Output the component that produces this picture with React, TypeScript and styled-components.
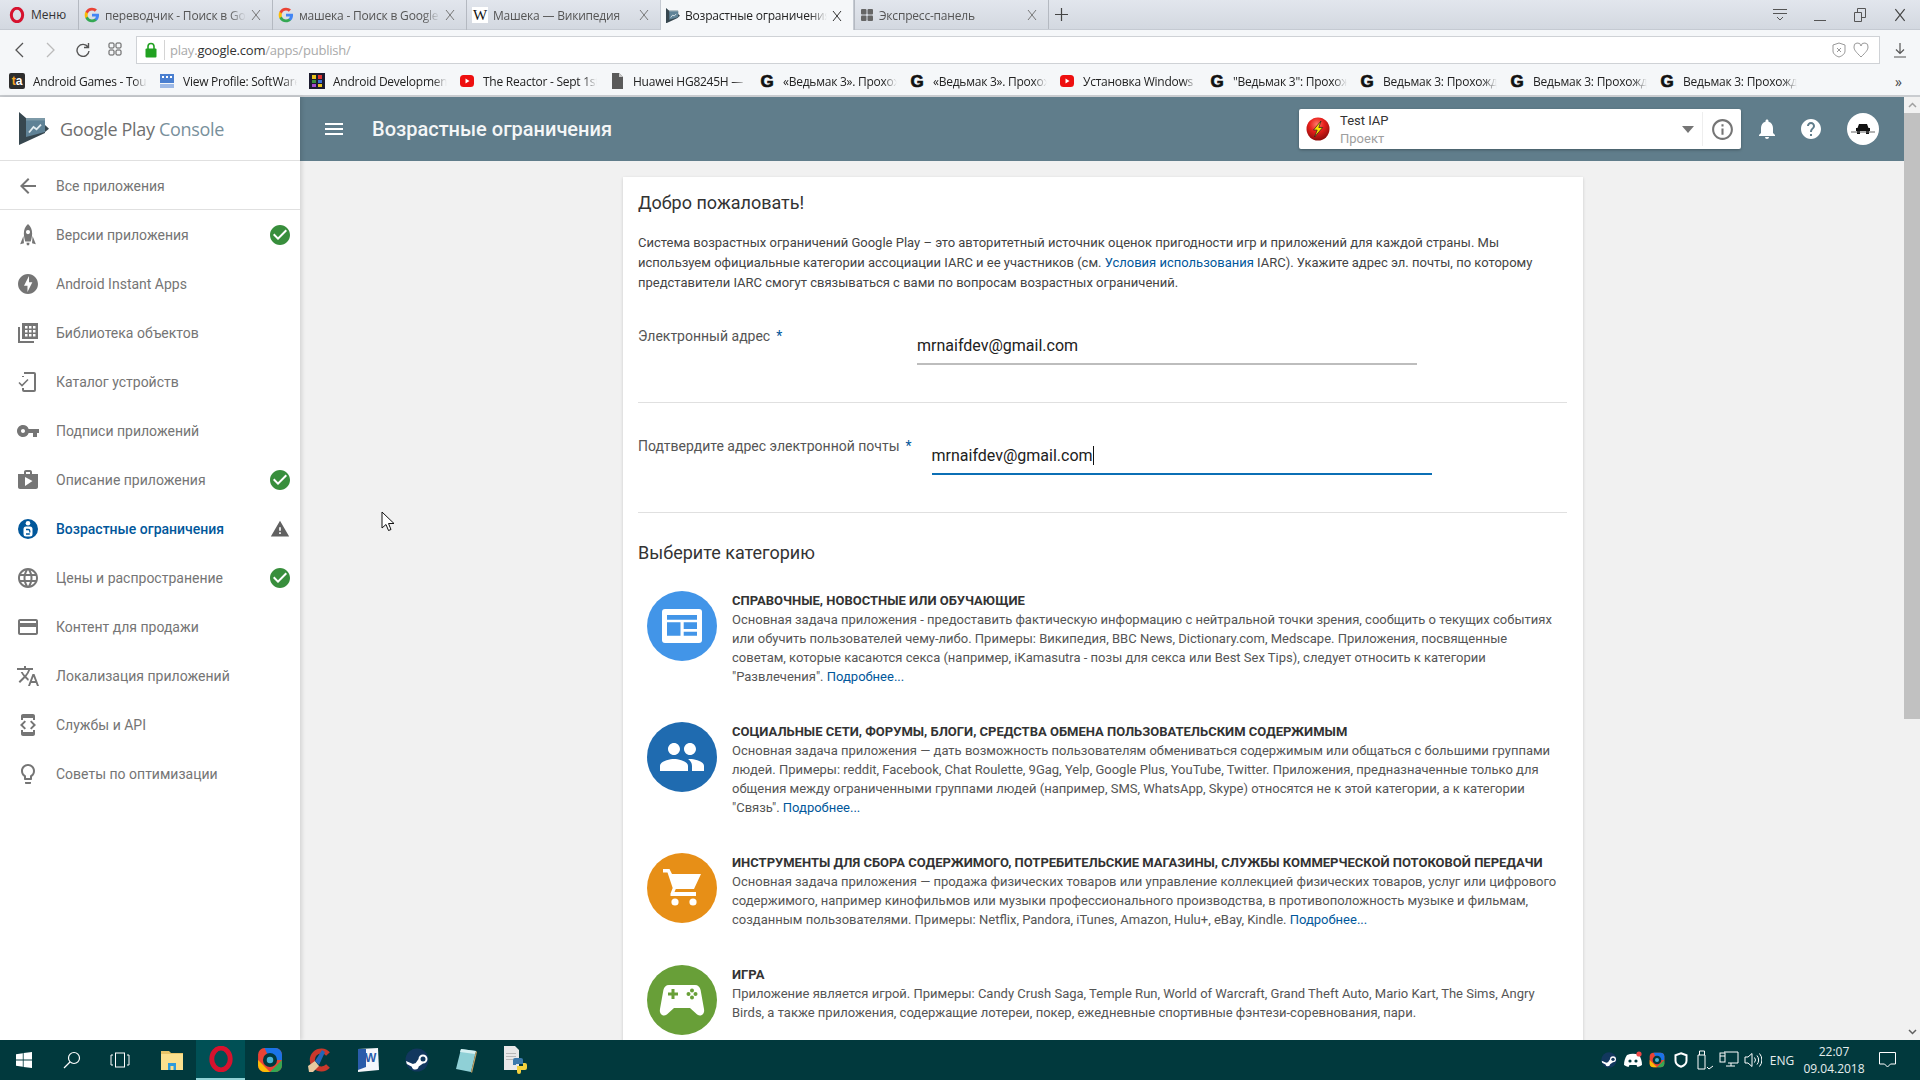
import React from 'react';
import styled, { createGlobalStyle } from 'styled-components';
import {
  MdArrowBack,
  MdCheckCircle,
  MdCreditCard,
  MdDeveloperMode,
  MdHelp,
  MdInfoOutline,
  MdLanguage,
  MdLightbulbOutline,
  MdMenu,
  MdNotifications,
  MdOfflineBolt,
  MdPeople,
  MdShop,
  MdTranslate,
  MdVpnKey,
  MdWarning,
} from 'react-icons/md';

const UI_FONT = '"Open Sans", "Noto Sans", sans-serif';
const APP_FONT = 'Roboto, "Noto Sans", sans-serif';

const GlobalStyle = createGlobalStyle`
  html, body {
    margin: 0;
    padding: 0;
    height: 100%;
    overflow: hidden;
    background: #f1f1f1;
    font-family: ${APP_FONT};
  }
  * { box-sizing: border-box; }
`;

const Page = styled.div`
  position: relative;
  width: 1920px;
  height: 1080px;
  display: flex;
  flex-direction: column;
  overflow: hidden;
`;

/* ---------- browser chrome ---------- */

const TabBar = styled.div`
  height: 30px;
  display: flex;
  align-items: stretch;
  background: linear-gradient(#e2e6ed, #d3d8e0);
  border-bottom: 1px solid #c5cad2;
  font-family: ${UI_FONT};
  font-size: 12px;
  letter-spacing: -0.2px;
  color: #333;
`;

const MenuButton = styled.div`
  width: 78px;
  display: flex;
  align-items: center;
  gap: 6px;
  padding-left: 9px;
  letter-spacing: 0;
`;

const Tab = styled.div<{ $active?: boolean }>`
  width: 194px;
  height: ${(p) => (p.$active ? '31px' : '30px')};
  display: flex;
  align-items: center;
  gap: 5px;
  padding: 0 11px 0 5px;
  background: ${(p) => (p.$active ? '#f5f7f9' : 'transparent')};
  border-left: 1px solid ${(p) => (p.$active ? '#c5cad2' : '#b4b9c1')};
  border-right: ${(p) => (p.$active ? '1px solid #c5cad2' : 'none')};
  color: ${(p) => (p.$active ? '#222' : '#555')};
`;

const Fade = styled.span`
  flex: 1;
  min-width: 0;
  overflow: hidden;
  white-space: nowrap;
  -webkit-mask-image: linear-gradient(to right, #000 88%, transparent 100%);
  mask-image: linear-gradient(to right, #000 88%, transparent 100%);
`;

const NewTab = styled.div`
  width: 26px;
  display: flex;
  align-items: center;
  justify-content: center;
  border-left: 1px solid #b4b9c1;
`;

const WindowControls = styled.div`
  margin-left: auto;
  display: flex;
  align-items: center;
`;

const WindowButton = styled.div`
  width: 40px;
  display: flex;
  justify-content: center;
`;

const Toolbar = styled.div`
  height: 36px;
  padding-top: 3px;
  display: flex;
  align-items: center;
  background: #f5f7f9;
`;

const NavButton = styled.div`
  width: 32px;
  display: flex;
  justify-content: center;
  color: #555;
`;

const NavGroup = styled.div`
  width: 136px;
  display: flex;
  padding-left: 3px;
`;

const AddressBar = styled.div`
  width: 1744px;
  height: 28px;
  background: #fff;
  border: 1px solid #cfd2d6;
  display: flex;
  align-items: center;
  padding: 0 10px 0 8px;
  font-family: ${UI_FONT};
  font-size: 13px;
  letter-spacing: -0.2px;
  color: #a9a9a9;
`;

const UrlDivider = styled.span`
  width: 1px;
  height: 20px;
  background: #d4d4d4;
  margin: 0 5px 0 7px;
`;

const UrlHost = styled.span`
  color: #333;
`;

const AddressIcons = styled.div`
  margin-left: auto;
  display: flex;
  gap: 7px;
  align-items: center;
`;

const DownloadButton = styled.div`
  width: 40px;
  display: flex;
  justify-content: center;
`;

const Bookmarks = styled.div`
  height: 31px;
  padding-top: 1px;
  display: flex;
  align-items: center;
  background: #f5f7f9;
  border-bottom: 2px solid #c9ccd0;
  font-family: ${UI_FONT};
  font-size: 12px;
  letter-spacing: -0.25px;
  color: #222;
`;

const Bookmark = styled.div`
  width: 150px;
  flex: none;
  display: flex;
  align-items: center;
  gap: 8px;
  padding: 0 3px 0 9px;
`;

const MoreBookmarks = styled.div`
  margin-left: 95px;
  color: #444;
  font-size: 14px;
`;

const FaviconBox = styled.span<{ $bg?: string; $color?: string }>`
  width: 16px;
  height: 16px;
  flex: none;
  display: inline-flex;
  align-items: center;
  justify-content: center;
  overflow: hidden;
  background: ${(p) => p.$bg || 'transparent'};
  color: ${(p) => p.$color || '#111'};
  border-radius: 2px;
  font-weight: 700;
  line-height: 1;
  letter-spacing: 0;
`;

const GLetter = styled(FaviconBox)`
  font-family: "Liberation Sans", sans-serif;
  font-size: 17px;
  font-weight: 900;
  -webkit-text-stroke: 0.7px #111;
`;

const WikiLetter = styled(FaviconBox)`
  font-family: "Liberation Serif", serif;
  font-size: 15px;
  font-weight: 400;
  background: #fff;
  border-radius: 0;
`;

const TaLogo = styled(FaviconBox)`
  font-family: "Liberation Sans", sans-serif;
  font-size: 12px;
  background: #2d2d2d;
`;

const Orange = styled.span`
  color: #f7a823;
`;

const White = styled.span`
  color: #fff;
`;

/* ---------- console layout ---------- */

const Body = styled.div`
  flex: 1;
  min-height: 0;
  display: flex;
`;

const Sidebar = styled.aside`
  width: 300px;
  flex: none;
  background: #fff;
  box-shadow: 2px 0 4px rgba(0, 0, 0, 0.12);
  z-index: 2;
  font-size: 14px;
  color: #757575;
`;

const LogoRow = styled.div`
  height: 64px;
  display: flex;
  align-items: center;
  gap: 11px;
  padding-left: 19px;
  border-bottom: 1px solid #e0e0e0;
`;

const LogoText = styled.div`
  font-family: "Open Sans", ${APP_FONT};
  font-size: 18px;
  letter-spacing: -0.33px;
  color: #6f6f6f;
  white-space: nowrap;
`;

const LogoConsole = styled.span`
  color: #78909c;
`;

const BackRow = styled.div`
  height: 49px;
  padding-top: 1px;
  display: flex;
  align-items: center;
  gap: 16px;
  padding-left: 16px;
  border-bottom: 1px solid #e0e0e0;
`;

const NavList = styled.nav`
  display: flex;
  flex-direction: column;
`;

const NavItem = styled.div<{ $active?: boolean }>`
  height: 49px;
  display: flex;
  align-items: center;
  gap: 16px;
  padding: 0 8px 0 16px;
  color: ${(p) => (p.$active ? '#01579b' : '#757575')};
  font-weight: ${(p) => (p.$active ? 500 : 400)};
`;

const NavIcon = styled.span`
  width: 24px;
  height: 24px;
  flex: none;
  display: flex;
  font-size: 24px;
`;

const NavBadge = styled.span<{ $color: string; $small?: boolean }>`
  margin-left: auto;
  margin-right: ${(p) => (p.$small ? '2px' : '0')};
  display: flex;
  font-size: ${(p) => (p.$small ? '20px' : '24px')};
  color: ${(p) => p.$color};
`;

const Right = styled.div`
  flex: 1;
  min-width: 0;
  display: flex;
`;

const Column = styled.div`
  flex: 1;
  min-width: 0;
  display: flex;
  flex-direction: column;
`;

const Header = styled.header`
  height: 64px;
  flex: none;
  background: #607d8b;
  display: flex;
  align-items: center;
  padding-left: 22px;
  color: #fff;
`;

const HeaderTitle = styled.div`
  margin-left: 26px;
  font-size: 20px;
  font-weight: 500;
  color: #f4f6f7;
`;

const ProjectBox = styled.div`
  margin-left: auto;
  width: 442px;
  height: 40px;
  background: #fff;
  border-radius: 2px;
  box-shadow: 0 1px 3px rgba(0, 0, 0, 0.3);
  display: flex;
  align-items: center;
  padding-left: 7px;
  color: #333;
`;

const ProjectText = styled.div`
  margin-left: 10px;
  padding-top: 2px;
  font-size: 13px;
  line-height: 18px;
`;

const ProjectSub = styled.div`
  color: #9e9e9e;
`;

const Caret = styled.span`
  margin-left: auto;
  width: 0;
  height: 0;
  border-left: 6px solid transparent;
  border-right: 6px solid transparent;
  border-top: 7px solid #757575;
`;

const ProjectInfo = styled.div`
  margin-left: 8px;
  width: 39px;
  height: 34px;
  display: flex;
  align-items: center;
  justify-content: center;
  border-left: 1px solid #eee;
  color: #757575;
  font-size: 25px;
`;

const HeaderIcons = styled.div`
  display: flex;
  align-items: center;
  padding-left: 4px;
  padding-right: 25px;
`;

const HeaderIcon = styled.div`
  width: 44px;
  display: flex;
  justify-content: center;
  font-size: 24px;
`;

const Avatar = styled.div`
  width: 32px;
  height: 32px;
  margin-left: 14px;
  border-radius: 50%;
  background: #fff;
  display: flex;
  align-items: center;
  justify-content: center;
`;

const Main = styled.main`
  flex: 1;
  min-height: 0;
  overflow: hidden;
  padding: 16px 0 0 2px;
`;

const Card = styled.section`
  width: 960px;
  margin: 0 auto;
  background: #fff;
  padding: 14px 16px 40px 15px;
  box-shadow: 0 1px 3px rgba(0, 0, 0, 0.16);
  color: #333;
`;

const Heading = styled.h2`
  margin: 0;
  font-size: 18px;
  font-weight: 400;
  line-height: 24px;
  color: #333;
`;

const Intro = styled.p`
  margin: 18px 0 0;
  font-size: 13px;
  line-height: 20px;
  color: #444;
`;

const TextLink = styled.a`
  color: #01579b;
`;

const FieldRow = styled.div`
  display: flex;
  margin-top: 33px;
`;

const FieldLabel = styled.label`
  min-width: 259px;
  margin-right: 20px;
  font-size: 14px;
  line-height: 20px;
  color: #555;
  white-space: nowrap;
`;

const Required = styled.span`
  margin-left: 6px;
  color: #01579b;
`;

const FieldValue = styled.div<{ $focused?: boolean }>`
  width: 500px;
  height: 39px;
  padding-top: 8px;
  font-size: 16px;
  line-height: 24px;
  color: #212121;
  border-bottom: ${(p) => (p.$focused ? '2px solid #0b6fb5' : '2px solid #bdbdbd')};
`;

const TextCaret = styled.span`
  display: inline-block;
  width: 1px;
  height: 19px;
  vertical-align: -4px;
  background: #111;
`;

const Divider = styled.hr`
  margin: 37px 0 0;
  border: 0;
  border-top: 1px solid #e0e0e0;
`;

const CategoryHeading = styled(Heading)`
  margin-top: 28px;
`;

const Categories = styled.div`
  margin-top: 26px;
  padding-left: 9px;
`;

const Category = styled.div`
  display: flex;
  gap: 15px;
  margin-bottom: 36px;
`;

const CategoryCircle = styled.div<{ $color: string }>`
  width: 70px;
  height: 70px;
  flex: none;
  border-radius: 50%;
  background: ${(p) => p.$color};
  display: flex;
  align-items: center;
  justify-content: center;
  color: #fff;
`;

const CategoryText = styled.div`
  flex: 1;
  font-size: 13px;
  line-height: 19px;
  color: #555;
`;

const CategoryTitle = styled.div`
  font-weight: 700;
  color: #333;
`;

const Line = styled.div`
  white-space: nowrap;
`;

const Scrollbar = styled.div`
  width: 16px;
  flex: none;
  background: #f1f1f1;
  display: flex;
  flex-direction: column;
`;

const ScrollArrow = styled.div`
  height: 16px;
  flex: none;
  display: flex;
  align-items: center;
  justify-content: center;
`;

const ScrollThumb = styled.div`
  height: 606px;
  background: #c1c1c1;
`;

const ScrollSpace = styled.div`
  flex: 1;
`;

const Pointer = styled.svg`
  position: absolute;
  left: 381px;
  top: 511px;
`;

/* ---------- taskbar ---------- */

const Taskbar = styled.footer`
  height: 40px;
  flex: none;
  background: #01393d;
  display: flex;
  align-items: stretch;
  color: #fff;
  z-index: 3;
  font-family: ${UI_FONT};
  font-size: 12px;
`;

const SystemButtons = styled.div`
  display: flex;
  padding-right: 3px;
`;

const TaskButton = styled.div<{ $wide?: boolean; $active?: boolean }>`
  width: ${(p) => (p.$wide ? '49px' : '48px')};
  display: flex;
  align-items: center;
  justify-content: center;
  background: ${(p) => (p.$active ? '#005055' : 'transparent')};
  border-bottom: ${(p) => (p.$active ? '2px solid #8fd3d6' : '0')};
`;

const Tray = styled.div`
  margin-left: auto;
  display: flex;
  align-items: center;
  padding-right: 15px;
`;

const TrayIcon = styled.div`
  width: 24px;
  display: flex;
  justify-content: center;
`;

const TrayLang = styled.div`
  width: 34px;
  text-align: center;
  color: #e6eeee;
`;

const Clock = styled.div`
  width: 70px;
  text-align: center;
  line-height: 17px;
  color: #e6eeee;
`;

const Notification = styled.div`
  width: 36px;
  display: flex;
  justify-content: center;
`;

/* ---------- drawn icons ---------- */

const GoogleIcon = () => (
  <svg width="16" height="16" viewBox="0 0 24 24">
    <path fill="#4285F4" d="M22.56 12.25c0-.78-.07-1.53-.2-2.25H12v4.26h5.92c-.26 1.37-1.04 2.53-2.21 3.31v2.77h3.57c2.08-1.92 3.28-4.74 3.28-8.09z" />
    <path fill="#34A853" d="M12 23c2.97 0 5.46-.98 7.28-2.66l-3.57-2.77c-.98.66-2.23 1.06-3.71 1.06-2.86 0-5.29-1.93-6.16-4.53H2.18v2.84C3.99 20.53 7.7 23 12 23z" />
    <path fill="#FBBC05" d="M5.84 14.09c-.22-.66-.35-1.36-.35-2.09s.13-1.43.35-2.09V7.07H2.18C1.43 8.55 1 10.22 1 12s.43 3.45 1.18 4.93l2.85-2.22.81-.62z" />
    <path fill="#EA4335" d="M12 5.38c1.62 0 3.06.56 4.21 1.64l3.15-3.15C17.45 2.09 14.97 1 12 1 7.7 1 3.99 3.47 2.18 7.07l3.66 2.84c.87-2.6 3.3-4.53 6.16-4.53z" />
  </svg>
);

const OperaIcon = ({ size = 16 }: { size?: number }) => (
  <svg width={size} height={size} viewBox="0 0 24 24">
    <ellipse cx="12" cy="12" rx="8.5" ry="10" fill="none" stroke="#d6122e" strokeWidth="4.5" />
  </svg>
);

const CloseGlyph = ({ color = '#666', size = 10 }: { color?: string; size?: number }) => (
  <svg width={size} height={size + 2} viewBox="0 0 10 12" fill="none" stroke={color} strokeWidth="1">
    <path d="M1 1l8 10M9 1L1 11" />
  </svg>
);

const DialIcon = ({ color = '#666' }: { color?: string }) => (
  <svg width="14" height="14" viewBox="0 0 14 14" fill={color}>
    <rect x="1" y="1" width="5.5" height="5.5" rx="1" />
    <rect x="7.5" y="1" width="5.5" height="5.5" rx="1" />
    <rect x="1" y="7.5" width="5.5" height="5.5" rx="1" />
    <rect x="7.5" y="7.5" width="5.5" height="5.5" rx="1" />
  </svg>
);

const PlayLogo = ({ size = 16 }: { size?: number }) => (
  <svg width={size} height={size * 1.1} viewBox="0 0 30 33">
    <path fill="#37474f" d="M0 0l7 6h19v7l4 3.700-4 3.300v1L0 33z" />
    <path fill="#5f8296" d="M7 8h19v12L7 25z" />
    <path fill="#7d9aa8" d="M7 6h19v2.500H7z" />
    <path fill="none" stroke="#e4edf1" strokeWidth="1.800" d="M10 20.500l4.500-5.500 3 2.300 4.500-4.700" />
  </svg>
);

const YoutubeIcon = () => (
  <svg width="16" height="16" viewBox="0 0 16 16">
    <rect x="1" y="2" width="14" height="12" rx="3.5" fill="#ee0f0f" />
    <path d="M6.5 5.5l4 2.5-4 2.500z" fill="#fff" />
  </svg>
);

const FileIcon = () => (
  <svg width="16" height="16" viewBox="0 0 16 16">
    <path d="M3 0h7l4 4v12H3z" fill="#5a5a5a" />
    <path d="M10 0v4h4z" fill="#c8c8c8" />
  </svg>
);

const TeamIcon = () => (
  <svg width="16" height="16" viewBox="0 0 16 16">
    <rect x="1" y="1" width="14" height="9" fill="#4a7fd0" />
    <rect x="3" y="3" width="2" height="2" fill="#fff" />
    <rect x="7" y="3" width="2" height="2" fill="#fff" />
    <rect x="11" y="3" width="2" height="2" fill="#fff" />
    <rect x="1" y="11" width="14" height="4" fill="#9db9e6" />
  </svg>
);

const DevIcon = () => (
  <svg width="16" height="16" viewBox="0 0 16 16">
    <rect width="16" height="16" fill="#1b1b2f" />
    <rect x="3" y="2" width="4" height="4" fill="#e8c31c" />
    <rect x="9" y="2" width="4" height="4" fill="#d33" />
    <rect x="3" y="7" width="4" height="3" fill="#3a8f3a" />
    <rect x="9" y="7" width="4" height="3" fill="#3b6fd6" />
    <rect x="3" y="11" width="4" height="3" fill="#a14bd0" />
    <rect x="9" y="11" width="4" height="3" fill="#e8c31c" />
  </svg>
);

const RocketIcon = () => (
  <svg width="24" height="24" viewBox="3 1 18 22" fill="currentColor">
    <path d="M12 2c2.600 2.200 3.800 5.500 3.800 8.600 0 2.600-.6 5-1.300 7.400H9.500c-.7-2.400-1.300-4.800-1.300-7.400C8.200 7.500 9.400 4.200 12 2zm0 5.400a1.900 1.900 0 100 3.800 1.900 1.900 0 000-3.800z" />
    <path d="M7.800 13l-3 7.500 3.500-1zM16.200 13l3 7.500-3.500-1zM10.600 19h2.800l-.4 2.500h-2z" />
  </svg>
);

const LibraryIcon = () => (
  <svg width="24" height="24" viewBox="0 0 24 24" fill="currentColor">
    <path d="M2 6h2v14h14v2H2z" />
    <path fillRule="evenodd" d="M6 2h16v16H6zM9 5v2.500h2.500V5zM13 5v2.500h2.500V5zM17 5v2.500h2.500V5zM9 9v2.500h2.500V9zM13 9v2.500h2.500V9zM17 9v2.500h2.500V9zM9 13v2.500h2.500V13zM13 13v2.500h2.500V13zM17 13v2.500h2.500V13z" />
  </svg>
);

const DeviceCheckIcon = () => (
  <svg width="24" height="24" viewBox="0 0 24 24" fill="none" stroke="currentColor" strokeWidth="2">
    <path d="M9 3h9a1 1 0 011 1v16a1 1 0 01-1 1H8a1 1 0 01-1-1v-2M9 3H8M7 7V6" />
    <path d="M3 12.500l3 3 6-6" strokeWidth="1.600" />
  </svg>
);

const AgeIcon = () => (
  <svg width="24" height="24" viewBox="0 0 24 24">
    <circle cx="12" cy="12" r="10" fill="#01579b" />
    <circle cx="12" cy="6.300" r="2.300" fill="#fff" />
    <rect x="7.500" y="9.500" width="9" height="10" rx="2.500" fill="#fff" />
    <path d="M10 12.500h2.200a1.600 1.600 0 011.600 1.600v1.400M13.800 17H10" fill="none" stroke="#01579b" strokeWidth="1.300" />
  </svg>
);

const NewsIcon = () => (
  <svg width="40" height="34" viewBox="0 0 40 34">
    <rect width="40" height="34" rx="3" fill="#fff" />
    <path fill="#4295e8" d="M5 6h30v4.700H5zM5 13.300h13.500v13.400H5zM21.700 13.300H35V20H21.700zM21.700 22.700H35v4H21.700z" />
  </svg>
);

const CartIcon = () => (
  <svg width="38" height="38" viewBox="0 0 38 38" fill="#fff">
    <path d="M0 0h6.500l2.500 5h29l-7 15H12.800l-1.300 3H33v4H7.500v-2.500l2.200-5.500L4.500 3.500H0z" />
    <circle cx="12" cy="33" r="3.600" />
    <circle cx="30" cy="33" r="3.600" />
  </svg>
);

const GameIcon = () => (
  <svg width="46" height="32" viewBox="0 0 46 32">
    <path fill="#fff" d="M10 1h26c3 0 5 2 5.600 5L45 25c.8 4-1.500 6.500-4 6.500-2 0-3-1-4.500-2.500L31 24H15l-5.500 5c-1.500 1.500-2.500 2.500-4.500 2.500-2.500 0-4.800-2.500-4-6.500L4.400 6C5 3 7 1 10 1z" />
    <path fill="#689f38" d="M9 8.500h3.500V5h3v3.500H19v3h-3.500V15h-3v-3.500H9z" />
    <circle cx="33" cy="6.500" r="2" fill="#689f38" />
    <circle cx="33" cy="13.500" r="2" fill="#689f38" />
    <circle cx="29.500" cy="10" r="2" fill="#689f38" />
    <circle cx="36.500" cy="10" r="2" fill="#689f38" />
  </svg>
);

const ProjectIcon = () => (
  <svg width="24" height="24" viewBox="0 0 24 24">
    <defs>
      <radialGradient id="ball" cx="45%" cy="30%" r="70%">
        <stop offset="0%" stopColor="#ff7a6a" />
        <stop offset="45%" stopColor="#e8201c" />
        <stop offset="100%" stopColor="#8e0b0b" />
      </radialGradient>
    </defs>
    <circle cx="12" cy="12" r="11.500" fill="url(#ball)" />
    <path fill="#ffe600" stroke="#222" strokeWidth="0.700" d="M15 4l-7.500 9h3.700L8.500 20l8.200-9.500h-3.900z" />
  </svg>
);

const CarIcon = () => (
  <svg width="26" height="14" viewBox="0 0 26 14">
    <path fill="#111" d="M9 2h8l1.500 4H20v3H6V6h1.500z" />
    <rect x="7" y="9" width="3" height="3" fill="#111" />
    <rect x="16" y="9" width="3" height="3" fill="#111" />
    <rect x="1" y="9.500" width="24" height="1" fill="#666" />
  </svg>
);

const WindowsIcon = () => (
  <svg width="16" height="16" viewBox="0 0 16 16" fill="#fff">
    <path d="M0 2.200l6.800-1v6.400H0zM7.600 1.100L16 0v7.600H7.600zM0 8.400h6.800v6.400l-6.800-1zM7.600 8.400H16V16l-8.400-1.100z" />
  </svg>
);

const SearchIcon = () => (
  <svg width="18" height="18" viewBox="0 0 18 18" fill="none" stroke="#fff" strokeWidth="1.200">
    <circle cx="11" cy="7" r="5.500" />
    <path d="M7 11l-6 6" />
  </svg>
);

const TaskViewIcon = () => (
  <svg width="20" height="16" viewBox="0 0 20 16" fill="none" stroke="#fff" strokeWidth="1">
    <rect x="5.500" y="1" width="9" height="14" />
    <path d="M3 3H1v10h2M17 3h2v10h-2" />
  </svg>
);

const ExplorerIcon = () => (
  <svg width="22" height="20" viewBox="0 0 22 20">
    <path fill="#e8c468" d="M0 1h8l2 2h12v3H0z" />
    <path fill="#fbe08e" d="M0 4h22v16H0z" />
    <rect x="7" y="13" width="8" height="7" fill="#2d9bdc" />
    <rect x="9.500" y="16" width="3" height="4" fill="#fbe08e" />
  </svg>
);

const ChromeCaptureIcon = ({ size = 24 }: { size?: number }) => (
  <svg width={size} height={size} viewBox="0 0 24 24">
    <rect x="1" y="1" width="22" height="22" rx="6" fill="#ea4335" />
    <path fill="#34a853" d="M23 12v5a6 6 0 01-6 6h-5z" />
    <path fill="#1a73e8" d="M7 1h10a6 6 0 016 6v5H12z" />
    <path fill="#fbbc05" d="M1 17a6 6 0 006 6h5L1 12z" />
    <circle cx="12" cy="12" r="6.500" fill="#01393d" />
    <circle cx="12" cy="12" r="3" fill="#4bb5d6" />
  </svg>
);

const CCleanerIcon = () => (
  <svg width="26" height="26" viewBox="0 0 26 26">
    <path fill="none" stroke="#c9382b" strokeWidth="5" d="M22 7a9 9 0 100 12" />
    <path fill="#e8c9a0" d="M2 19l7-5 4 5-6 6H3z" />
    <path fill="#2266b8" d="M9 14l7-11 3 2-6 13z" />
  </svg>
);

const WordIcon = () => (
  <svg width="24" height="26" viewBox="0 0 24 26">
    <path fill="#f5f7fb" d="M2 2l20-1 1 22-21 2z" />
    <path fill="#2a5caa" d="M2 2h8v18l-8 3z" />
    <text x="9" y="15" fontFamily="Liberation Sans" fontWeight="700" fontSize="12" fill="#2a5caa">W</text>
  </svg>
);

const SteamIcon = ({ size = 24 }: { size?: number }) => (
  <svg width={size} height={size} viewBox="0 0 24 24">
    <circle cx="12" cy="12" r="11.500" fill="#12375e" />
    <path fill="#fff" d="M1 13l7 3a3.500 3.500 0 012.500-.8l3-4.200a4.500 4.500 0 114.500 4.500l-4.300 3a3.500 3.500 0 01-6.900.2L1.800 16z" />
    <circle cx="18" cy="11" r="2.500" fill="#12375e" />
  </svg>
);

const NotepadIcon = () => (
  <svg width="22" height="26" viewBox="0 0 22 26">
    <path fill="#8fd0d6" d="M6 2l15 2-5 21-15-3z" />
    <path fill="#d6f0f2" d="M6 2l15 2-1 3L5 5z" />
    <path fill="#c8a264" d="M16 25l5-21 1 1-5 21z" />
  </svg>
);

const PythonFileIcon = () => (
  <svg width="24" height="28" viewBox="0 0 24 28">
    <path fill="#e8e8e8" d="M1 0h11l4 4v20H1z" />
    <path fill="#b9b9b9" d="M3 7h10v1H3zM3 10h10v1H3zM3 13h7v1H3z" />
    <path fill="#3b79ac" d="M12 12h6a2 2 0 012 2v4h-7v1h-3v-5a2 2 0 012-2z" />
    <path fill="#f4d13d" d="M20 17h2a2 2 0 012 2v3a2 2 0 01-2 2h-4v2a2 2 0 01-4 0v-6h6z" />
  </svg>
);

const DiscordIcon = () => (
  <svg width="20" height="18" viewBox="0 0 20 18">
    <path fill="#fff" d="M4 4c4-1.800 8-1.800 12 0 2 3 3 6 3 10-1.500 1-3 1.600-4.500 2l-1-2H6.500l-1 2C4 15.600 2.500 15 1 14c0-4 1-7 3-10z" />
    <circle cx="7" cy="10" r="1.600" fill="#01393d" />
    <circle cx="13" cy="10" r="1.600" fill="#01393d" />
    <circle cx="16" cy="3" r="2.600" fill="#f04747" />
  </svg>
);

const ShieldTray = () => (
  <svg width="14" height="16" viewBox="0 0 14 16" fill="none" stroke="#fff" strokeWidth="2">
    <path d="M7 1.200l5.500 2v5.600c0 2.800-2.500 4.900-5.500 6-3-1.100-5.500-3.200-5.500-6V3.200z" />
  </svg>
);

const UsbTray = () => (
  <svg width="18" height="20" viewBox="0 0 18 20" fill="none" stroke="#fff" strokeWidth="1">
    <path d="M3 5h6v14H2V5zM3.500 5V1h5v4" />
    <path d="M11 17l2 2 4-3" />
  </svg>
);

const NetworkTray = () => (
  <svg width="20" height="18" viewBox="0 0 20 18" fill="none" stroke="#fff" strokeWidth="1">
    <path d="M5 1h14v11H9M7 15h9M12 12v3" />
    <rect x="1" y="2" width="5" height="9" />
    <path d="M1 5h5" />
  </svg>
);

const VolumeTray = () => (
  <svg width="18" height="16" viewBox="0 0 18 16" fill="none" stroke="#fff" strokeWidth="1">
    <path d="M1 5h3l4-3.500v13L4 11H1zM10.500 5.500a4 4 0 010 5M13 3.500a7 7 0 010 9M15.500 1.500a10 10 0 010 13" />
  </svg>
);

const NotificationIcon = () => (
  <svg width="17" height="16" viewBox="0 0 17 16" fill="none" stroke="#fff" strokeWidth="1">
    <path d="M.5.500h16v11.500h-5L8.500 15l-3-3h-5z" />
  </svg>
);

/* ---------- content ---------- */

const TABS = [
  { title: 'переводчик - Поиск в Google', icon: <GoogleIcon /> },
  { title: 'машека - Поиск в Google', icon: <GoogleIcon /> },
  { title: 'Машека — Википедия', icon: <WikiLetter>W</WikiLetter> },
  { title: 'Возрастные ограничения', icon: <PlayLogo size={14} />, active: true },
  { title: 'Экспресс-панель', icon: <DialIcon /> },
];

const G = <GLetter>G</GLetter>;

const BOOKMARKS = [
  { title: 'Android Games - Tournaments', icon: <TaLogo><Orange>t</Orange><White>a</White></TaLogo> },
  { title: 'View Profile: SoftWare', icon: <TeamIcon /> },
  { title: 'Android Developments', icon: <DevIcon /> },
  { title: 'The Reactor - Sept 1st', icon: <YoutubeIcon /> },
  { title: 'Huawei HG8245H — настройка', icon: <FileIcon /> },
  { title: '«Ведьмак 3». Прохождение', icon: G },
  { title: '«Ведьмак 3». Прохождение', icon: G },
  { title: 'Установка Windows 10', icon: <YoutubeIcon /> },
  { title: '"Ведьмак 3": Прохождение', icon: G },
  { title: 'Ведьмак 3: Прохождение', icon: G },
  { title: 'Ведьмак 3: Прохождение', icon: G },
  { title: 'Ведьмак 3: Прохождение', icon: G },
];

const CHECK = { color: '#388e3c', icon: <MdCheckCircle /> };

const NAV = [
  { label: 'Версии приложения', icon: <RocketIcon />, badge: CHECK },
  { label: 'Android Instant Apps', icon: <MdOfflineBolt /> },
  { label: 'Библиотека объектов', icon: <LibraryIcon /> },
  { label: 'Каталог устройств', icon: <DeviceCheckIcon /> },
  { label: 'Подписи приложений', icon: <MdVpnKey /> },
  { label: 'Описание приложения', icon: <MdShop />, badge: CHECK },
  { label: 'Возрастные ограничения', icon: <AgeIcon />, active: true, badge: { color: '#616161', icon: <MdWarning />, small: true } },
  { label: 'Цены и распространение', icon: <MdLanguage />, badge: CHECK },
  { label: 'Контент для продажи', icon: <MdCreditCard /> },
  { label: 'Локализация приложений', icon: <MdTranslate /> },
  { label: 'Службы и API', icon: <MdDeveloperMode /> },
  { label: 'Советы по оптимизации', icon: <MdLightbulbOutline /> },
];

const CATEGORIES = [
  {
    color: '#4295e8',
    icon: <NewsIcon />,
    title: 'СПРАВОЧНЫЕ, НОВОСТНЫЕ ИЛИ ОБУЧАЮЩИЕ',
    lines: [
      'Основная задача приложения - предоставить фактическую информацию с нейтральной точки зрения, сообщить о текущих событиях',
      'или обучить пользователей чему-либо. Примеры: Википедия, BBC News, Dictionary.com, Medscape. Приложения, посвященные',
      'советам, которые касаются секса (например, iKamasutra - позы для секса или Best Sex Tips), следует относить к категории',
      '"Развлечения".',
    ],
    more: true,
  },
  {
    color: '#1f6bb0',
    icon: <MdPeople size={48} />,
    title: 'СОЦИАЛЬНЫЕ СЕТИ, ФОРУМЫ, БЛОГИ, СРЕДСТВА ОБМЕНА ПОЛЬЗОВАТЕЛЬСКИМ СОДЕРЖИМЫМ',
    lines: [
      'Основная задача приложения — дать возможность пользователям обмениваться содержимым или общаться с большими группами',
      'людей. Примеры: reddit, Facebook, Chat Roulette, 9Gag, Yelp, Google Plus, YouTube, Twitter. Приложения, предназначенные только для',
      'общения между ограниченными группами людей (например, SMS, WhatsApp, Skype) относятся не к этой категории, а к категории',
      '"Связь".',
    ],
    more: true,
  },
  {
    color: '#e78f17',
    icon: <CartIcon />,
    title: 'ИНСТРУМЕНТЫ ДЛЯ СБОРА СОДЕРЖИМОГО, ПОТРЕБИТЕЛЬСКИЕ МАГАЗИНЫ, СЛУЖБЫ КОММЕРЧЕСКОЙ ПОТОКОВОЙ ПЕРЕДАЧИ',
    lines: [
      'Основная задача приложения — продажа физических товаров или управление коллекцией физических товаров, услуг или цифрового',
      'содержимого, например кинофильмов или музыки профессионального производства, в противоположность музыке и фильмам,',
      'созданным пользователями. Примеры: Netflix, Pandora, iTunes, Amazon, Hulu+, eBay, Kindle.',
    ],
    more: true,
  },
  {
    color: '#689f38',
    icon: <GameIcon />,
    title: 'ИГРА',
    lines: [
      'Приложение является игрой. Примеры: Candy Crush Saga, Temple Run, World of Warcraft, Grand Theft Auto, Mario Kart, The Sims, Angry',
      'Birds, а также приложения, содержащие лотереи, покер, ежедневные спортивные фэнтези-соревнования, пари.',
    ],
  },
];

const APPS = [
  { icon: <ExplorerIcon /> },
  { icon: <OperaIcon size={26} />, active: true },
  { icon: <ChromeCaptureIcon size={26} /> },
  { icon: <CCleanerIcon /> },
  { icon: <WordIcon /> },
  { icon: <SteamIcon size={24} /> },
  { icon: <NotepadIcon /> },
  { icon: <PythonFileIcon /> },
];

export default function App() {
  return (
    <Page>
      <GlobalStyle />

      <TabBar>
        <MenuButton>
          <OperaIcon />
          Меню
        </MenuButton>
        {TABS.map((tab) => (
          <Tab key={tab.title} $active={tab.active}>
            {tab.icon}
            <Fade>{tab.title}</Fade>
            <CloseGlyph color={tab.active ? '#333' : '#777'} />
          </Tab>
        ))}
        <NewTab>
          <svg width="13" height="13" viewBox="0 0 13 13" stroke="#444" strokeWidth="1.200">
            <path d="M6.500 0v13M0 6.500h13" />
          </svg>
        </NewTab>
        <WindowControls>
          <WindowButton>
            <svg width="14" height="14" viewBox="0 0 14 14" fill="none" stroke="#555">
              <path d="M0 1.500h14M0 5.500h14M4 9l3 3 3-3" />
            </svg>
          </WindowButton>
          <WindowButton>
            <svg width="12" height="12" viewBox="0 0 12 12" stroke="#555">
              <path d="M0 11.500h12" />
            </svg>
          </WindowButton>
          <WindowButton>
            <svg width="12" height="14" viewBox="0 0 12 14" fill="none" stroke="#555">
              <path d="M.5 4.500h7v9h-7zM3.500 4.500v-4h8v9h-4" />
            </svg>
          </WindowButton>
          <WindowButton>
            <CloseGlyph color="#444" size={12} />
          </WindowButton>
        </WindowControls>
      </TabBar>

      <Toolbar>
        <NavGroup>
          <NavButton>
            <svg width="10" height="16" viewBox="0 0 10 16" fill="none" stroke="#555" strokeWidth="1.300">
              <path d="M9 1L2 8l7 7" />
            </svg>
          </NavButton>
          <NavButton>
            <svg width="10" height="16" viewBox="0 0 10 16" fill="none" stroke="#bbb" strokeWidth="1.300">
              <path d="M1 1l7 7-7 7" />
            </svg>
          </NavButton>
          <NavButton>
            <svg width="14" height="16" viewBox="0 0 14 16" fill="none" stroke="#555" strokeWidth="1.400">
              <path d="M12 5a6 6 0 101 4M12.500 1v4.500H8" />
            </svg>
          </NavButton>
          <NavButton>
            <svg width="14" height="14" viewBox="0 0 14 14" fill="none" stroke="#555">
              <rect x="1" y="1" width="5" height="5" rx="1" />
              <rect x="8" y="1" width="5" height="5" rx="1" />
              <rect x="1" y="8" width="5" height="5" rx="1" />
              <rect x="8" y="8" width="5" height="5" rx="1" />
            </svg>
          </NavButton>
        </NavGroup>
        <AddressBar>
          <svg width="12" height="16" viewBox="0 0 12 16">
            <path d="M3 7V4.500a3 3 0 016 0V7" fill="none" stroke="#21a121" strokeWidth="1.600" />
            <rect x="0.500" y="6.500" width="11" height="9" rx="1" fill="#21a121" />
          </svg>
          <UrlDivider />
          <span>
            play.<UrlHost>google.com</UrlHost>/apps/publish/
          </span>
          <AddressIcons>
            <svg width="14" height="16" viewBox="0 0 14 16" fill="none" stroke="#999">
              <path d="M7 1l6 2v6c0 3-3 5-6 6-3-1-6-3-6-6V3zM5 6l4 4M9 6l-4 4" />
            </svg>
            <svg width="16" height="16" viewBox="0 0 16 16" fill="none" stroke="#999">
              <path d="M8 15C3 10 1 8 1 5a3.500 3.500 0 017-1 3.500 3.500 0 017 1c0 3-2 5-7 10z" />
            </svg>
          </AddressIcons>
        </AddressBar>
        <DownloadButton>
          <svg width="14" height="16" viewBox="0 0 14 16" fill="none" stroke="#555" strokeWidth="1.200">
            <path d="M7 1v10M3 7.500l4 4 4-4M1 15h12" />
          </svg>
        </DownloadButton>
      </Toolbar>

      <Bookmarks>
        {BOOKMARKS.map((b, i) => (
          <Bookmark key={i}>
            {b.icon}
            <Fade>{b.title}</Fade>
          </Bookmark>
        ))}
        <MoreBookmarks>»</MoreBookmarks>
      </Bookmarks>

      <Body>
        <Sidebar>
          <LogoRow>
            <PlayLogo size={30} />
            <LogoText>
              Google Play <LogoConsole>Console</LogoConsole>
            </LogoText>
          </LogoRow>
          <BackRow>
            <NavIcon>
              <MdArrowBack />
            </NavIcon>
            Все приложения
          </BackRow>
          <NavList>
            {NAV.map((item) => (
              <NavItem key={item.label} $active={item.active}>
                <NavIcon>{item.icon}</NavIcon>
                {item.label}
                {item.badge && (
                  <NavBadge $color={item.badge.color} $small={'small' in item.badge}>
                    {item.badge.icon}
                  </NavBadge>
                )}
              </NavItem>
            ))}
          </NavList>
        </Sidebar>

        <Right>
          <Column>
            <Header>
              <MdMenu size={24} />
              <HeaderTitle>Возрастные ограничения</HeaderTitle>
              <ProjectBox>
                <ProjectIcon />
                <ProjectText>
                  Test IAP
                  <ProjectSub>Проект</ProjectSub>
                </ProjectText>
                <Caret />
                <ProjectInfo>
                  <MdInfoOutline />
                </ProjectInfo>
              </ProjectBox>
              <HeaderIcons>
                <HeaderIcon>
                  <MdNotifications />
                </HeaderIcon>
                <HeaderIcon>
                  <MdHelp />
                </HeaderIcon>
                <Avatar>
                  <CarIcon />
                </Avatar>
              </HeaderIcons>
            </Header>

            <Main>
              <Card>
                <Heading>Добро пожаловать!</Heading>
                <Intro>
                  Система возрастных ограничений Google Play – это авторитетный источник оценок пригодности игр и приложений для каждой страны. Мы
                  <br />
                  используем официальные категории ассоциации IARC и ее участников (см. <TextLink>Условия использования</TextLink> IARC). Укажите адрес эл. почты, по которому
                  <br />
                  представители IARC смогут связываться с вами по вопросам возрастных ограничений.
                </Intro>

                <FieldRow>
                  <FieldLabel>
                    Электронный адрес<Required>*</Required>
                  </FieldLabel>
                  <FieldValue>mrnaifdev@gmail.com</FieldValue>
                </FieldRow>
                <Divider />

                <FieldRow>
                  <FieldLabel>
                    Подтвердите адрес электронной почты<Required>*</Required>
                  </FieldLabel>
                  <FieldValue $focused>
                    mrnaifdev@gmail.com
                    <TextCaret />
                  </FieldValue>
                </FieldRow>
                <Divider />

                <CategoryHeading>Выберите категорию</CategoryHeading>
                <Categories>
                  {CATEGORIES.map((c) => (
                    <Category key={c.title}>
                      <CategoryCircle $color={c.color}>{c.icon}</CategoryCircle>
                      <CategoryText>
                        <CategoryTitle>{c.title}</CategoryTitle>
                        {c.lines.map((line, i) => (
                          <Line key={i}>
                            {line}
                            {c.more && i === c.lines.length - 1 && (
                              <>
                                {' '}
                                <TextLink>Подробнее...</TextLink>
                              </>
                            )}
                          </Line>
                        ))}
                      </CategoryText>
                    </Category>
                  ))}
                </Categories>
              </Card>
            </Main>
          </Column>

          <Scrollbar>
            <ScrollArrow>
              <svg width="9" height="6" viewBox="0 0 9 6" fill="none" stroke="#a0a0a0" strokeWidth="1.500">
                <path d="M1 5l3.500-3.500L8 5" />
              </svg>
            </ScrollArrow>
            <ScrollThumb />
            <ScrollSpace />
            <ScrollArrow>
              <svg width="9" height="6" viewBox="0 0 9 6" fill="none" stroke="#606060" strokeWidth="1.500">
                <path d="M1 1l3.500 3.500L8 1" />
              </svg>
            </ScrollArrow>
          </Scrollbar>
        </Right>
      </Body>

      <Taskbar>
        <SystemButtons>
          <TaskButton>
            <WindowsIcon />
          </TaskButton>
          <TaskButton>
            <SearchIcon />
          </TaskButton>
          <TaskButton>
            <TaskViewIcon />
          </TaskButton>
        </SystemButtons>
        {APPS.map((app, i) => (
          <TaskButton key={i} $wide $active={app.active}>
            {app.icon}
          </TaskButton>
        ))}
        <Tray>
          <TrayIcon>
            <SteamIcon size={16} />
          </TrayIcon>
          <TrayIcon>
            <DiscordIcon />
          </TrayIcon>
          <TrayIcon>
            <ChromeCaptureIcon size={16} />
          </TrayIcon>
          <TrayIcon>
            <ShieldTray />
          </TrayIcon>
          <TrayIcon>
            <UsbTray />
          </TrayIcon>
          <TrayIcon>
            <NetworkTray />
          </TrayIcon>
          <TrayIcon>
            <VolumeTray />
          </TrayIcon>
          <TrayLang>ENG</TrayLang>
          <Clock>
            22:07
            <br />
            09.04.2018
          </Clock>
          <Notification>
            <NotificationIcon />
          </Notification>
        </Tray>
      </Taskbar>

      <Pointer width="14" height="22" viewBox="0 0 14 22">
        <path d="M1 1v16l4-3.500 2.500 6 2.500-1-2.500-6H13z" fill="#fff" stroke="#111" strokeWidth="1" />
      </Pointer>
    </Page>
  );
}
